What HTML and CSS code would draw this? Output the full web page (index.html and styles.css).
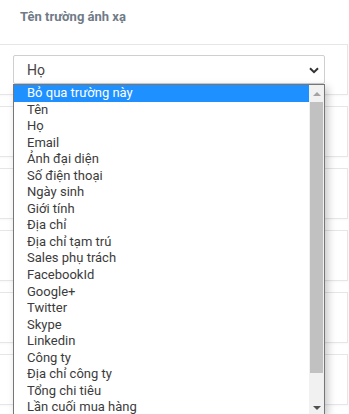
FILE: index.html
```html
<!DOCTYPE html>
<html lang="vi">
<head>
    <meta charset="UTF-8">
    <meta name="viewport" content="width=device-width, initial-scale=1.0">
    <title>Tên trường ánh xạ</title>
    <link rel="stylesheet" href="styles.css">
</head>
<body>
    <div class="mapping">
        <div class="mapping-head">Tên trường ánh xạ</div>

        <div class="mapping-rows">
            <div class="mapping-row">
                <div class="field">
                    <div class="select-box">
                        <span>Họ</span>
                        <svg class="chevron" width="10" height="7" viewBox="0 0 10 7">
                            <polyline points="1,1.2 5,5.2 9,1.2" fill="none" stroke="#333" stroke-width="2"/>
                        </svg>
                    </div>

                    <!-- open list of the select -->
                    <div class="select-list">
                        <div class="options">
                            <div class="option active">Bỏ qua trường này</div>
                            <div class="option">Tên</div>
                            <div class="option">Họ</div>
                            <div class="option">Email</div>
                            <div class="option">Ảnh đại diện</div>
                            <div class="option">Số điện thoại</div>
                            <div class="option">Ngày sinh</div>
                            <div class="option">Giới tính</div>
                            <div class="option">Địa chỉ</div>
                            <div class="option">Địa chỉ tạm trú</div>
                            <div class="option">Sales phụ trách</div>
                            <div class="option">FacebookId</div>
                            <div class="option">Google+</div>
                            <div class="option">Twitter</div>
                            <div class="option">Skype</div>
                            <div class="option">Linkedin</div>
                            <div class="option">Công ty</div>
                            <div class="option">Địa chỉ công ty</div>
                            <div class="option">Tổng chi tiêu</div>
                            <div class="option">Lần cuối mua hàng</div>
                        </div>
                        <div class="scrollbar">
                            <span class="arrow up"></span>
                            <span class="thumb"></span>
                            <span class="arrow down"></span>
                        </div>
                    </div>
                </div>
            </div>
            <div class="mapping-row"></div>
            <div class="mapping-row"></div>
            <div class="mapping-row"></div>
            <div class="mapping-row"></div>
            <div class="mapping-row"></div>
        </div>
    </div>
</body>
</html>
```

FILE: styles.css
```css
body {
    margin: 0;
    background: #fff;
    font-family: Roboto, "Liberation Sans", Arial, sans-serif;
    overflow: hidden;
}

.mapping-head {
    height: 44px;
    padding-left: 20px;
    line-height: 34px;
    font-size: 13px;
    font-weight: bold;
    color: #707b87;
}

.mapping-rows {
    margin: 0 1px 0 -1px;
}

.mapping-row {
    height: 49px;
    margin-bottom: 11px;
    border: 1px solid #e6e6e6;
    background: #fff;
    box-shadow: 0 1px 2px rgba(0, 0, 0, 0.03);
}

.field {
    position: relative;
    width: 312px;
    margin: 10px 0 0 13px;
}

.select-box {
    display: flex;
    align-items: center;
    justify-content: space-between;
    box-sizing: border-box;
    height: 29px;
    padding: 0 5px 0 13px;
    border: 1px solid #cfcfcf;
    border-radius: 2px;
    font-size: 14px;
    color: #444;
}

.chevron {
    margin-top: 1px;
}

.select-list {
    position: absolute;
    top: 29px;
    left: 0;
    z-index: 5;
    display: flex;
    box-sizing: border-box;
    width: 312px;
    height: 331px;
    border: 1px solid #767676;
    background: #fff;
    box-shadow: 3px 3px 8px rgba(0, 0, 0, 0.22);
}

.options {
    flex: 1;
    overflow: hidden;
}

.option {
    height: 16.55px;
    padding-left: 13px;
    line-height: 16.55px;
    font-size: 13px;
    color: #3c3c3c;
    white-space: nowrap;
}

.option.active {
    background: #1e90ff;
    color: #fff;
}

.scrollbar {
    display: flex;
    flex-direction: column;
    align-items: center;
    width: 15px;
    background: #f1f1f1;
}

.arrow {
    width: 0;
    height: 0;
    border-left: 4px solid transparent;
    border-right: 4px solid transparent;
}

.arrow.up {
    margin: 7px 0 6px;
    border-bottom: 4px solid #a3a3a3;
}

.arrow.down {
    margin: auto 0 4px;
    border-top: 4px solid #505050;
}

.thumb {
    width: 13px;
    height: 271px;
    background: #c1c1c1;
}
```
